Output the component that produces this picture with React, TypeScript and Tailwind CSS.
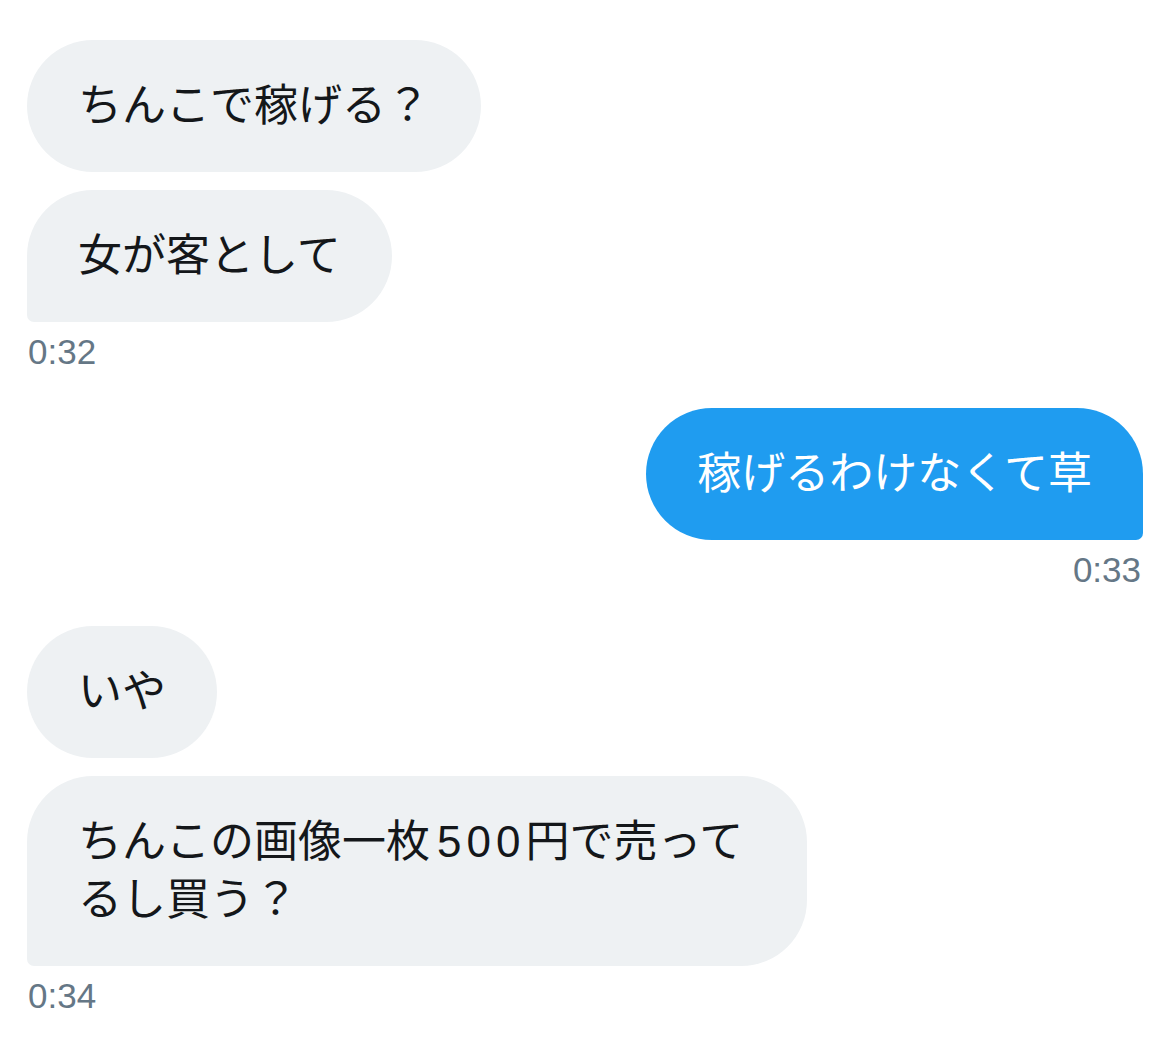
import React from "react";

const cjk = { fontFamily: '"Liberation Sans", "Noto Sans CJK JP", sans-serif' };

function Bubble({ children, side, className = "" }: { children: React.ReactNode; side: "l" | "r"; className?: string }) {
  const base =
    "px-[51px] py-[37px] text-[44px] leading-[58px] rounded-[66px] whitespace-nowrap";
  const sideCls =
    side === "l"
      ? "bg-[#eef1f3] text-[#14171a] rounded-bl-[7px] self-start"
      : "bg-[#1f9cf0] text-white rounded-br-[7px] self-end";
  return (
    <div className={`${base} ${sideCls} ${className}`} style={cjk}>
      {children}
    </div>
  );
}

function Time({ children, side }: { children: React.ReactNode; side: "l" | "r" }) {
  return (
    <div
      className={`text-[35px] leading-[35px] text-[#657786] mt-[12px] ${side === "l" ? "self-start pl-px" : "self-end pr-[2px]"}`}
      style={{ fontFamily: '"Liberation Sans", Arial, sans-serif' }}
    >
      {children}
    </div>
  );
}

export default function App() {
  return (
    <div className="w-[1170px] h-[1046px] bg-white px-[27px] pt-[40px] flex flex-col">
      <div className="flex flex-col gap-[18px]">
        <Bubble side="l" className="rounded-bl-[66px]">ちんこで稼げる？</Bubble>
        <Bubble side="l">女が客として</Bubble>
      </div>
      <Time side="l">0:32</Time>

      <div className="flex flex-col mt-[39px]">
        <Bubble side="r">稼げるわけなくて草</Bubble>
      </div>
      <Time side="r">0:33</Time>

      <div className="flex flex-col gap-[18px] mt-[39px]">
        <Bubble side="l" className="rounded-bl-[66px]">いや</Bubble>
        <Bubble side="l" className="w-[780px]">
          ちんこの画像一枚<span className="ml-[7px] tracking-[5px]">500</span>円で売って
          <br />
          るし買う？
        </Bubble>
      </div>
      <Time side="l">0:34</Time>
    </div>
  );
}
